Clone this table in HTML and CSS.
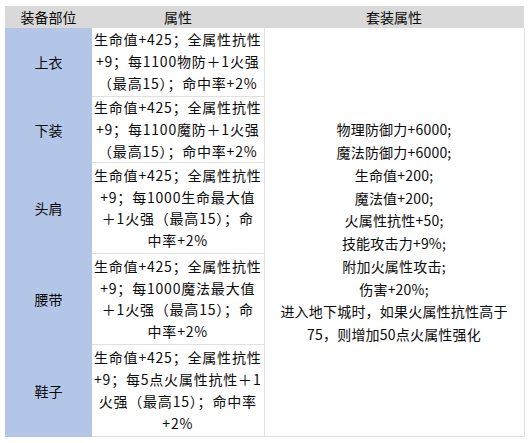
FILE: index.html
```html
<!DOCTYPE html>
<html lang="zh">
<head>
<meta charset="utf-8">
<link rel="stylesheet" href="styles.css">
</head>
<body>
<table class="gear">
  <colgroup>
    <col class="c1"><col class="c2"><col class="c3">
  </colgroup>
  <thead>
    <tr class="head">
      <th>装备部位</th>
      <th>属性</th>
      <th>套装属性</th>
    </tr>
  </thead>
  <tbody>
    <tr class="r1">
      <td class="part">上衣</td>
      <td class="attr">生命值+425；全属性抗性<br>+9；每1100物防＋1火强<br>（最高15）；命中率+2%</td>
      <td class="set" rowspan="5">物理防御力+6000;<br>魔法防御力+6000;<br>生命值+200;<br>魔法值+200;<br>火属性抗性+50;<br>技能攻击力+9%;<br>附加火属性攻击;<br>伤害+20%;<br>进入地下城时，如果火属性抗性高于<br>75，则增加50点火属性强化</td>
    </tr>
    <tr class="r2">
      <td class="part">下装</td>
      <td class="attr">生命值+425；全属性抗性<br>+9；每1100魔防＋1火强<br>（最高15）；命中率+2%</td>
    </tr>
    <tr class="r3">
      <td class="part">头肩</td>
      <td class="attr">生命值+425；全属性抗性<br>+9；每1000生命最大值<br>＋1火强（最高15）；命<br>中率+2%</td>
    </tr>
    <tr class="r4">
      <td class="part">腰带</td>
      <td class="attr">生命值+425；全属性抗性<br>+9；每1000魔法最大值<br>＋1火强（最高15）；命<br>中率+2%</td>
    </tr>
    <tr class="r5">
      <td class="part">鞋子</td>
      <td class="attr">生命值+425；全属性抗性<br>+9；每5点火属性抗性＋1<br>火强（最高15）；命中率<br>+2%</td>
    </tr>
  </tbody>
</table>
</body>
</html>
```

FILE: styles.css
```css
html, body {
  margin: 0;
  padding: 0;
  background: #ffffff;
}
body {
  padding: 6px 0 0 5px;
  font-family: "Noto Sans CJK SC", "Noto Sans", "Liberation Sans", sans-serif;
  font-size: 14px;
  color: #0a0a0a;
}
.gear {
  border-collapse: collapse;
  table-layout: fixed;
  width: 519px;
}
.c1 { width: 87px; }
.c2 { width: 172px; }
.c3 { width: 260px; }
.gear th, .gear td {
  padding: 0;
  text-align: center;
  vertical-align: middle;
  white-space: nowrap;
}
.head th {
  background: #d9d9d9;
  height: 22px;
  font-weight: normal;
  line-height: 22px;
}
.part {
  background: #b4c6e7;
}
.attr {
  line-height: 21.8px;
  letter-spacing: 0.8px;
  border-bottom: 1px solid #e0e0e0;
  border-right: 1px solid #e0e0e0;
}
.set {
  line-height: 22.75px;
  letter-spacing: 0.2px;
  border-right: 1px solid #e0e0e0;
  border-bottom: 1px solid #e0e0e0;
}
.r1 td { height: 68px; }
.r2 td { height: 65px; }
.r3 td { height: 90px; }
.r4 td { height: 90px; }
.r5 td { height: 91px; }
```
